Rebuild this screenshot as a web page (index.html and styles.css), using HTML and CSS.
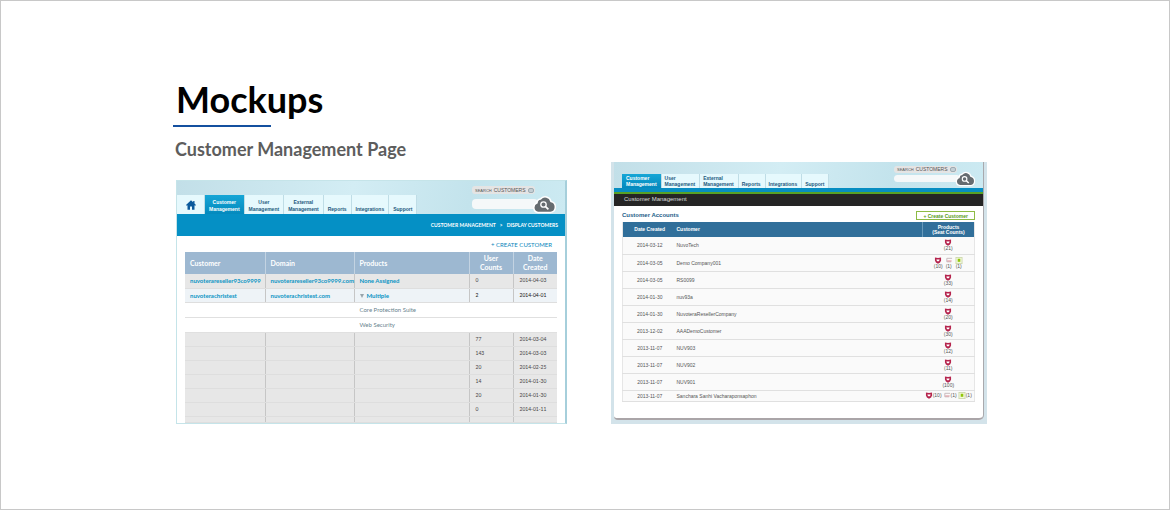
FILE: index.html
```html
<!DOCTYPE html>
<html lang="en">
<head>
<meta charset="utf-8">
<title>Mockups</title>
<link rel="stylesheet" href="styles.css">
</head>
<body>
<svg class="defs" aria-hidden="true">
  <symbol id="cloud" viewBox="0 0 24 20">
    <path d="M6 18.500a5 5 0 0 1-1-9.600A4 4 0 0 1 8.500 5a6 6 0 0 1 10.500 2.500A5.600 5.600 0 0 1 18.500 18.500Z" fill="#666c70" stroke="#fff" stroke-width="1.500"/>
    <circle cx="11.500" cy="10.500" r="2.700" fill="none" stroke="#fff" stroke-width="1.300"/>
    <path d="M13.600 12.600l2.800 2.800" stroke="#fff" stroke-width="1.700"/>
  </symbol>
  <symbol id="shield" viewBox="0 0 8 8">
    <path d="M.5.5Q4 1.500 7.500.5V4Q7 6.500 4 7.700 1 6.500.5 4Z" fill="#b5244d"/>
    <path d="M2.500 2.300L4 3l1.500-.7v2L4 5.200 2.500 4.300Z" fill="#fff"/>
  </symbol>
  <symbol id="mail" viewBox="0 0 8 8">
    <path d="M7.500 1.500H1.500V5.500H6.500" fill="none" stroke="#c2b3b7"/>
    <path d="M2 4.500h5" stroke="#e08c92"/>
  </symbol>
  <symbol id="leaf" viewBox="0 0 8 8">
    <rect x=".5" y=".5" width="7" height="7" fill="#f3f8dc" stroke="#ccd8ab"/>
    <path d="M2.500 2h3v3.500h-3z" fill="#91c60b"/>
  </symbol>
</svg>
<main class="board">
  <header class="intro">
    <h1 class="title">Mockups</h1>
    <h2 class="subtitle">Customer Management Page</h2>
  </header>
  <div class="shots">
    <section class="shot reseller">
      <div class="top">
        <nav class="tabs">
          <a class="tab home" href="#" aria-label="Home"><svg class="house" viewBox="0 0 10 10"><path d="M5 .3L0 5l.8.8.7-.6V9.700H4V6.500h2v3.200h2.500V5.200l.7.600L10 5 8.500 3.500V1H7.200v1.300Z" fill="#0b5a9c"/></svg></a>
          <a class="tab active" href="#">Customer<br>Management</a>
          <a class="tab" href="#">User<br>Management</a>
          <a class="tab" href="#">External<br>Management</a>
          <a class="tab" href="#">Reports</a>
          <a class="tab" href="#">Integrations</a>
          <a class="tab" href="#">Support</a>
        </nav>
        <form class="search">
          <label class="scope" for="find-a"><small>SEARCH</small> CUSTOMERS <span class="arrow"></span></label>
          <div class="field"><input id="find-a" type="text"><button class="go" type="button" aria-label="Search"><svg viewBox="0 0 24 20"><use href="#cloud"/></svg></button></div>
        </form>
      </div>
      <div class="crumbs"><span>CUSTOMER MANAGEMENT</span><span>&gt;</span><span>DISPLAY CUSTOMERS</span></div>
      <a class="create" href="#">+ CREATE CUSTOMER</a>
      <table class="list">
        <colgroup><col class="c-name"><col class="c-domain"><col class="c-products"><col class="c-count"><col class="c-date"></colgroup>
        <thead><tr><th>Customer</th><th>Domain</th><th>Products</th><th class="mid">User<br>Counts</th><th class="mid">Date<br>Created</th></tr></thead>
        <tbody>
          <tr><td><a href="#">nuvoterareseller93co9999</a></td><td><a href="#">nuvoterareseller93co9999.com</a></td><td><a href="#">None Assigned</a></td><td>0</td><td>2014-04-03</td></tr>
          <tr class="open"><td><a href="#">nuvoterachristest</a></td><td><a href="#">nuvoterachristest.com</a></td><td><span class="caret"></span><a href="#">Multiple</a></td><td>2</td><td>2014-04-01</td></tr>
          <tr class="detail"><td></td><td></td><td>Core Protection Suite</td><td></td><td></td></tr>
          <tr class="detail"><td></td><td></td><td>Web Security</td><td></td><td></td></tr>
          <tr><td></td><td></td><td></td><td>77</td><td>2014-03-04</td></tr>
          <tr><td></td><td></td><td></td><td>143</td><td>2014-03-03</td></tr>
          <tr><td></td><td></td><td></td><td>20</td><td>2014-02-25</td></tr>
          <tr><td></td><td></td><td></td><td>14</td><td>2014-01-30</td></tr>
          <tr><td></td><td></td><td></td><td>20</td><td>2014-01-30</td></tr>
          <tr><td></td><td></td><td></td><td>0</td><td>2014-01-11</td></tr>
          <tr class="cut"><td></td><td></td><td></td><td></td><td></td></tr>
        </tbody>
      </table>
    </section>
    <section class="shot accounts">
      <div class="sheet">
        <div class="top">
          <nav class="tabs">
            <a class="tab active" href="#">Customer<br>Management</a>
            <a class="tab" href="#">User<br>Management</a>
            <a class="tab" href="#">External<br>Management</a>
            <a class="tab" href="#">Reports</a>
            <a class="tab" href="#">Integrations</a>
            <a class="tab" href="#">Support</a>
          </nav>
          <form class="search">
            <label class="scope" for="find-b"><small>SEARCH</small> CUSTOMERS <span class="arrow"></span></label>
            <div class="field"><input id="find-b" type="text"><button class="go" type="button" aria-label="Search"><svg viewBox="0 0 24 20"><use href="#cloud"/></svg></button></div>
          </form>
        </div>
        <div class="bar">Customer Management</div>
        <div class="heading"><h3>Customer Accounts</h3><button class="add" type="button">+ Create Customer</button></div>
        <table class="grid">
          <colgroup><col class="g-date"><col><col class="g-products"></colgroup>
          <thead><tr><th class="mid">Date Created</th><th>Customer</th><th class="mid split">Products<br>(Seat Counts)</th></tr></thead>
          <tbody>
            <tr><td>2014-03-12</td><td>NuvoTech</td><td><div class="seats"><span><svg><use href="#shield"/></svg>(21)</span></div></td></tr>
            <tr><td>2014-03-05</td><td>Demo Company001</td><td><div class="seats"><span><svg><use href="#shield"/></svg>(10)</span><span><svg><use href="#mail"/></svg>(1)</span><span><svg><use href="#leaf"/></svg>(1)</span></div></td></tr>
            <tr><td>2014-03-05</td><td>RS0099</td><td><div class="seats"><span><svg><use href="#shield"/></svg>(33)</span></div></td></tr>
            <tr><td>2014-01-30</td><td>nuv93a</td><td><div class="seats"><span><svg><use href="#shield"/></svg>(14)</span></div></td></tr>
            <tr><td>2014-01-30</td><td>NuvoteraResellerCompany</td><td><div class="seats"><span><svg><use href="#shield"/></svg>(20)</span></div></td></tr>
            <tr><td>2013-12-02</td><td>AAADemoCustomer</td><td><div class="seats"><span><svg><use href="#shield"/></svg>(30)</span></div></td></tr>
            <tr><td>2013-11-07</td><td>NUV903</td><td><div class="seats"><span><svg><use href="#shield"/></svg>(12)</span></div></td></tr>
            <tr><td>2013-11-07</td><td>NUV902</td><td><div class="seats"><span><svg><use href="#shield"/></svg>(11)</span></div></td></tr>
            <tr><td>2013-11-07</td><td>NUV901</td><td><div class="seats"><span><svg><use href="#shield"/></svg>(100)</span></div></td></tr>
            <tr class="last"><td>2013-11-07</td><td>Sanchara Sanhi Vacharaponsaphon</td><td><div class="seats inline"><span><svg><use href="#shield"/></svg>(10)</span><span><svg><use href="#mail"/></svg>(1)</span><span><svg><use href="#leaf"/></svg>(1)</span></div></td></tr>
          </tbody>
        </table>
      </div>
    </section>
  </div>
</main>
</body>
</html>
```
FILE: styles.css
```css
* { box-sizing: border-box; }
body {
  margin: 0;
  min-height: 100vh;
  border: 1px solid #c8c8c8;
  background: #fff;
  font-family: "Liberation Sans", Arial, sans-serif;
}
a { color: inherit; text-decoration: none; }
h1, h2, h3 { margin: 0; }
table { border-collapse: collapse; table-layout: fixed; width: 100%; }
th, td { padding: 0; text-align: left; }
.defs { position: absolute; width: 0; height: 0; }

.board { max-width: 824px; margin: 0 auto; padding: 76px 10px 24px 0; }
.intro { font-family: Lato, "Open Sans", sans-serif; font-weight: 700; }
.title { padding-left: 3px; font-size: 36px; line-height: 44px; color: #000; }
.title::after { content: ""; display: block; width: 98px; height: 2px; margin: 4px 0 0 -3px; background: #14509f; }
.subtitle { padding: 12px 0 3px 2px; font-size: 18px; line-height: 20px; color: #5d5d5d; }
.shots { display: grid; grid-template-columns: 391fr 376fr; gap: 44px; align-items: end; padding-left: 3px; }
.shot { font-size: 6px; line-height: 7px; }

.top { display: flex; justify-content: space-between; align-items: flex-end; background: linear-gradient(100deg, #c2dfe8, #d3edf4 45%, #c3e3ec 75%, #cceaf2); }
.tabs { display: flex; align-items: flex-end; font: 700 5px/7px "Liberation Sans", Arial, sans-serif; color: #245a7d; text-align: center; }
.tab { display: flex; align-items: flex-end; justify-content: center; height: 19px; padding: 0 4px 1px; background: #e6f9fd; border-right: 1px solid #bfdde6; }
.tab.active { background: linear-gradient(#16a6d6, #0489bd); color: #fff; }
.scope { display: flex; align-items: center; gap: 2px; height: 9px; padding: 0 1px 0 3px; border-radius: 3px; background: #e4e4e4; color: #555; font: 5px/7px "Liberation Sans", Arial, sans-serif; }
.scope small { font-size: 4px; }
.arrow { width: 6px; height: 5px; border: 1px solid #9eabb2; border-radius: 2px; background: #c4cfd5; }
.search { display: flex; flex-direction: column; align-items: flex-start; }
.field { display: flex; align-items: center; }
.field input { width: 66px; height: 10px; margin-right: -6px; padding: 0 4px; border: 0; border-radius: 4px; background: #f5f8f9; font-size: 6px; }
.go { padding: 0; border: 0; background: none; }
.go svg { display: block; width: 24px; height: 20px; }

.reseller { border: 1px solid #c5e4e9; border-right: 2px solid #a6cfdb; font-family: Lato, "Open Sans", sans-serif; }
.reseller .top { height: 33px; padding-right: 9px; }
.home { width: 28px; padding: 0 0 4px; }
.reseller .search { height: 28px; }
.house { width: 10px; height: 10px; }
.crumbs { display: flex; justify-content: flex-end; gap: 4px; padding: 8px 7px 7px 0; background: #0590c5; color: #fff; font-size: 5px; font-weight: 700; line-height: 7px; }
.create { display: block; padding: 5px 13px 4px 0; text-align: right; font-size: 6px; line-height: 7px; color: #0b86bb; }
.list { width: calc(100% - 16px); margin: 0 8px; font-size: 6px; line-height: 7px; color: #444; white-space: nowrap; }
.c-name { width: 80px; }
.c-domain { width: 89px; }
.c-products { width: 115px; }
.c-count { width: 44px; }
.c-date { width: 44px; }
.list th { height: 22px; padding-left: 5px; background: #9db8d1; color: #fff; font-size: 7px; line-height: 9px; border-left: 1px solid #c3d3e2; }
.list .mid { padding: 0; text-align: center; }
.list td { height: 14px; padding-left: 5px; background: #e7e7e7; border-left: 1px solid #c6c6c6; border-bottom: 1px solid #dedede; }
.list th:first-child, .list td:first-child { border-left: 0; }
.list td:nth-child(4), .list td:nth-child(5) { padding-left: 6px; font-size: 5px; }
.list a { color: #0a94c4; font-weight: 700; }
.list .open td { background: #eef3f7; color: #111; }
.list .detail td { height: 15px; background: #fff; color: #69838e; border-left-color: #fff; border-bottom-color: #e0e0e0; }
.list .cut td { height: 6px; }
.caret { display: inline-block; margin-right: 3px; border: 2px solid transparent; border-top: 4px solid #98a4ab; border-bottom: 0; }

.accounts { padding: 0 3px 4px; background: #d3e3ea; }
.sheet { background: #fff; border-radius: 0 0 5px 4px; border-right: 1px solid #a9a9ad; border-bottom: 2px solid #aaa5a8; padding-bottom: 16px; }
.accounts .top { height: 26px; padding: 0 7px 0 8px; }
.accounts .tab { height: 14px; padding: 0 4px 1px 3px; line-height: 6px; text-align: left; }
.accounts .tab.active { padding-left: 4px; }
.accounts .search { height: 22px; }
.accounts .scope { height: 7px; }
.accounts .field { margin-top: -3px; }
.accounts .field input { height: 7px; }
.accounts .go svg { width: 22px; height: 17px; }
.bar { padding: 4px 10px 3px; border-top: 4px solid #078dc1; background: #252525; color: #ddd; font-size: 6px; line-height: 7px; box-shadow: inset 0 2px #58a126; }
.heading { display: flex; justify-content: space-between; align-items: center; padding: 5px 8px 2px; }
.heading h3 { font-size: 6px; line-height: 7px; color: #1c5d89; }
.add { height: 9px; padding: 0 6px; border: 1px solid #8dbb45; background: #fff; color: #579b21; font: 700 5px/6px "Liberation Sans", sans-serif; }
.grid { width: calc(100% - 16px); margin: 0 8px; font-size: 5px; line-height: 6px; color: #555; border: 1px solid #e6e6e6; border-top: 0; }
.g-date { width: 54px; }
.g-products { width: 52px; }
.grid th { height: 15px; background: #316f9a; color: #fff; font-size: 5px; line-height: 5px; }
.grid .mid { text-align: center; }
.grid .split { border-left: 1px solid #6799ba; }
.grid td { height: 17px; background: #fafafa; border-bottom: 1px solid #e0e0e0; }
.grid td:first-child { text-align: center; }
.grid .last td { height: 11px; }
.seats { display: flex; justify-content: center; gap: 2px; line-height: 5px; }
.seats span { display: flex; flex-direction: column; align-items: center; }
.seats svg { width: 8px; height: 7px; }
.seats.inline span { flex-direction: row; }
.seats.inline { gap: 1px; }
```
